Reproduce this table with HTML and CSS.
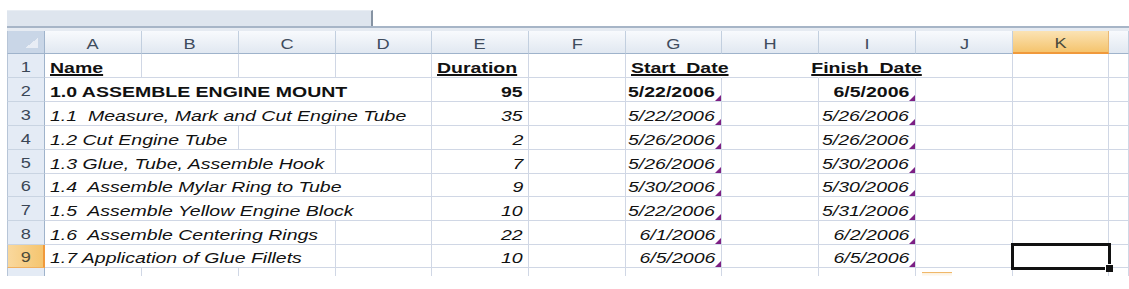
FILE: index.html
```html
<!DOCTYPE html>
<html>
<head>
<meta charset="utf-8">
<link rel="stylesheet" href="styles.css">
</head>
<body>
<div class="sheet">
  <div class="topbar"><div class="namebox"></div></div>
  <div class="rule"></div>
  <div class="band"></div>

  <div class="row head">
    <div class="corner"></div>
    <div class="hd"><span class="t">A</span></div>
    <div class="hd"><span class="t">B</span></div>
    <div class="hd"><span class="t">C</span></div>
    <div class="hd"><span class="t">D</span></div>
    <div class="hd"><span class="t">E</span></div>
    <div class="hd"><span class="t">F</span></div>
    <div class="hd"><span class="t">G</span></div>
    <div class="hd"><span class="t">H</span></div>
    <div class="hd"><span class="t">I</span></div>
    <div class="hd"><span class="t">J</span></div>
    <div class="hd hd-sel"><span class="t">K</span></div>
    <div class="hd"></div>
  </div>

  <div class="row">
    <div class="rh"><span class="t">1</span></div>
    <div class="c b u"><span class="t">Name</span></div>
    <div class="c"></div><div class="c"></div><div class="c"></div>
    <div class="c b u"><span class="t">Duration</span></div>
    <div class="c"></div>
    <div class="c b u nb"><span class="t">Start_Date</span></div>
    <div class="c nb"></div>
    <div class="c b u nb ctr"><span class="t">Finish_Date</span></div>
    <div class="c"></div><div class="c"></div><div class="c"></div>
  </div>

  <div class="row">
    <div class="rh"><span class="t">2</span></div>
    <div class="c b s4"><span class="t">1.0 ASSEMBLE ENGINE MOUNT</span></div>
    <div class="c b r"><span class="t">95</span></div>
    <div class="c"></div>
    <div class="c b d tri"><span class="t">5/22/2006</span></div>
    <div class="c"></div>
    <div class="c b d tri"><span class="t">6/5/2006</span></div>
    <div class="c"></div><div class="c"></div><div class="c"></div>
  </div>

  <div class="row">
    <div class="rh"><span class="t">3</span></div>
    <div class="c i s4"><span class="t">1.1  Measure, Mark and Cut Engine Tube</span></div>
    <div class="c i r"><span class="t">35</span></div>
    <div class="c"></div>
    <div class="c i d tri"><span class="t">5/22/2006</span></div>
    <div class="c"></div>
    <div class="c i d tri"><span class="t">5/26/2006</span></div>
    <div class="c"></div><div class="c"></div><div class="c"></div>
  </div>

  <div class="row">
    <div class="rh"><span class="t">4</span></div>
    <div class="c i s2"><span class="t">1.2 Cut Engine Tube</span></div>
    <div class="c"></div><div class="c"></div>
    <div class="c i r"><span class="t">2</span></div>
    <div class="c"></div>
    <div class="c i d tri"><span class="t">5/26/2006</span></div>
    <div class="c"></div>
    <div class="c i d tri"><span class="t">5/26/2006</span></div>
    <div class="c"></div><div class="c"></div><div class="c"></div>
  </div>

  <div class="row">
    <div class="rh"><span class="t">5</span></div>
    <div class="c i s3"><span class="t">1.3 Glue, Tube, Assemble Hook</span></div>
    <div class="c"></div>
    <div class="c i r"><span class="t">7</span></div>
    <div class="c"></div>
    <div class="c i d tri"><span class="t">5/26/2006</span></div>
    <div class="c"></div>
    <div class="c i d tri"><span class="t">5/30/2006</span></div>
    <div class="c"></div><div class="c"></div><div class="c"></div>
  </div>

  <div class="row short">
    <div class="rh"><span class="t">6</span></div>
    <div class="c i s4"><span class="t">1.4  Assemble Mylar Ring to Tube</span></div>
    <div class="c i r"><span class="t">9</span></div>
    <div class="c"></div>
    <div class="c i d tri"><span class="t">5/30/2006</span></div>
    <div class="c"></div>
    <div class="c i d tri"><span class="t">5/30/2006</span></div>
    <div class="c"></div><div class="c"></div><div class="c"></div>
  </div>

  <div class="row">
    <div class="rh"><span class="t">7</span></div>
    <div class="c i s4"><span class="t">1.5  Assemble Yellow Engine Block</span></div>
    <div class="c i r"><span class="t">10</span></div>
    <div class="c"></div>
    <div class="c i d tri"><span class="t">5/22/2006</span></div>
    <div class="c"></div>
    <div class="c i d tri"><span class="t">5/31/2006</span></div>
    <div class="c"></div><div class="c"></div><div class="c"></div>
  </div>

  <div class="row">
    <div class="rh"><span class="t">8</span></div>
    <div class="c i s3"><span class="t">1.6  Assemble Centering Rings</span></div>
    <div class="c"></div>
    <div class="c i r"><span class="t">22</span></div>
    <div class="c"></div>
    <div class="c i d tri"><span class="t">6/1/2006</span></div>
    <div class="c"></div>
    <div class="c i d tri"><span class="t">6/2/2006</span></div>
    <div class="c"></div><div class="c"></div><div class="c"></div>
  </div>

  <div class="row short">
    <div class="rh rh-sel"><span class="t">9</span></div>
    <div class="c i s3"><span class="t">1.7 Application of Glue Fillets</span></div>
    <div class="c"></div>
    <div class="c i r"><span class="t">10</span></div>
    <div class="c"></div>
    <div class="c i d tri"><span class="t">6/5/2006</span></div>
    <div class="c"></div>
    <div class="c i d tri"><span class="t">6/5/2006</span></div>
    <div class="c"></div>
    <div class="c active"><div class="selbox"><div class="handle"></div></div></div>
    <div class="c"></div>
  </div>

  <div class="row tail">
    <div class="rh"></div>
    <div class="c"></div><div class="c"></div><div class="c"></div><div class="c"></div>
    <div class="c"></div><div class="c"></div><div class="c"></div><div class="c"></div>
    <div class="c"></div>
    <div class="c"><div class="smarttag"></div></div>
    <div class="c"></div><div class="c"></div>
  </div>
</div>
</body>
</html>
```

FILE: styles.css
```css
html, body {
  margin: 0;
  padding: 0;
  background: #ffffff;
  overflow: hidden;
}

body {
  font-family: "Liberation Sans", Arial, sans-serif;
  color: #111111;
}

.sheet {
  margin-left: 7px;
}

.topbar {
  height: 26px;
  padding-top: 10px;
  box-sizing: border-box;
}

.namebox {
  width: 366px;
  height: 16px;
  background: #dee5ee;
  border-top: 1px solid #e8edf3;
  box-sizing: border-box;
  border-right: 2px solid #8693a3;
}

.rule {
  height: 2px;
  background: #a7b5c7;
}

.band {
  height: 3px;
  background: #e6ebf2;
}

.row {
  display: grid;
  grid-template-columns: 38px 97px 97px 97px 96px 97px 97px 96px 97px 97px 97px 96px 1fr;
  height: 24px;
}

.row.short { height: 23px; }
.row.head { height: 23px; }
.row.tail { height: 8px; }

.t {
  display: inline-block;
  transform: scaleX(1.3);
  transform-origin: left bottom;
}

/* column headers */
.corner {
  background-color: #c9d6e7;
  background-image: linear-gradient(to top left, #e8edf5 50%, transparent 50%);
  background-size: 13px 10px;
  background-position: right 6px bottom 5px;
  background-repeat: no-repeat;
  border-right: 1px solid #9fb3cb;
  border-bottom: 1px solid #9fb3cb;
  border-left: 1px solid #b7c5d7;
  box-sizing: border-box;
}

.hd {
  display: flex;
  align-items: flex-end;
  justify-content: center;
  box-sizing: border-box;
  background: linear-gradient(#f8fafd, #e1e8f1);
  border-right: 1px solid #c2cfdf;
  border-bottom: 1px solid #9fb3cb;
  font-size: 14px;
  line-height: 17px;
  color: #3f4c5d;
  min-width: 0;
}

.hd .t { transform-origin: center bottom; }

.hd-sel {
  background: linear-gradient(#fbe3b4, #f5c46e);
  border-bottom: 2px solid #f0993b;
  border-right-color: #e9b875;
  color: #4b4a3a;
}

/* row headers */
.rh {
  display: flex;
  align-items: flex-end;
  justify-content: center;
  box-sizing: border-box;
  padding-bottom: 1px;
  background: #e4ebf5;
  border-right: 1px solid #9fb3cb;
  border-bottom: 1px solid #c9d4e2;
  border-left: 1px solid #b7c5d7;
  font-size: 14px;
  line-height: 17px;
  color: #3a4656;
}

.rh .t { transform-origin: center bottom; }

.rh-sel {
  background: linear-gradient(to right, #f9d89d, #f5c56f);
  border-right: 2px solid #f0993b;
  border-bottom-color: #f0b060;
  color: #4b4a3a;
}

.tail .rh { border-bottom: none; }

/* cells */
.c {
  position: relative;
  display: flex;
  align-items: flex-end;
  justify-content: flex-start;
  box-sizing: border-box;
  padding: 0 5px 1px 5px;
  border-right: 1px solid #d0d7e5;
  border-bottom: 1px solid #d0d7e5;
  font-size: 15px;
  line-height: 17px;
  white-space: pre;
  min-width: 0;
}

.tail .c { border-bottom: none; }

.nb { border-right-color: transparent; }

.s2 { grid-column: span 2; }
.s3 { grid-column: span 3; }
.s4 { grid-column: span 4; }

.b { font-weight: bold; }
.i { font-style: italic; }
.u .t {
  text-decoration: underline;
  text-decoration-thickness: 1.5px;
  text-underline-offset: 1px;
}

.r {
  justify-content: flex-end;
  padding-right: 5px;
}
.r .t { transform-origin: right bottom; }

.d {
  justify-content: flex-end;
  padding-right: 6px;
}
.d .t { transform-origin: right bottom; }

.ctr { justify-content: center; }
.ctr .t { transform-origin: center bottom; }

/* smart tag indicator */
.tri::after {
  content: "";
  position: absolute;
  right: 0;
  bottom: 0;
  width: 0;
  height: 0;
  border-left: 6px solid transparent;
  border-bottom: 6px solid #7d1f84;
}

/* active cell */
.active { z-index: 3; }

.selbox {
  position: absolute;
  left: -2px;
  top: -2px;
  right: -3px;
  bottom: -3px;
  border: 3px solid #111111;
}

.handle {
  position: absolute;
  right: -5px;
  bottom: -5px;
  width: 7px;
  height: 7px;
  background: #111111;
  border-left: 1px solid #ffffff;
  border-top: 1px solid #ffffff;
}

.smarttag {
  position: absolute;
  left: 6px;
  top: 4px;
  width: 30px;
  height: 4px;
  border-top: 1px solid #f0b86a;
  background: linear-gradient(#fdf0dc, #ffffff);
}
```
